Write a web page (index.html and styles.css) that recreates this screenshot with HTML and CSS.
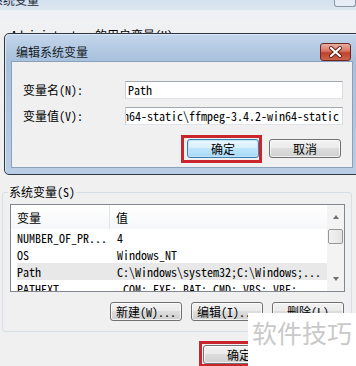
FILE: index.html
```html
<!DOCTYPE html>
<html>
<head>
<meta charset="utf-8">
<title>环境变量</title>
<link rel="stylesheet" href="styles.css">
</head>
<body>
<div class="window">
	<div class="window-title">
		<span class="window-caption">系统变量</span>
		<span class="window-close"></span>
	</div>
	<div class="window-body">
		<div class="user-vars">Administrator 的用户变量(U)</div>
		<fieldset class="group">
			<legend>系统变量(S)</legend>
			<div class="list">
				<div class="list-main">
					<div class="list-head">
						<span class="col-name">变量</span>
						<span class="col-value">值</span>
					</div>
					<div class="row"><span class="col-name">NUMBER_OF_PR...</span><span class="col-value">4</span></div>
					<div class="row"><span class="col-name">OS</span><span class="col-value">Windows_NT</span></div>
					<div class="row selected"><span class="col-name">Path</span><span class="col-value">C:\Windows\system32;C:\Windows;...</span></div>
					<div class="row"><span class="col-name">PATHEXT</span><span class="col-value">.COM;.EXE;.BAT;.CMD;.VBS;.VBE;...</span></div>
				</div>
				<div class="scrollbar">
					<span class="scroll-btn"><i class="arrow-up"></i></span>
					<span class="scroll-thumb"></span>
					<span class="scroll-track"></span>
					<span class="scroll-btn"><i class="arrow-down"></i></span>
				</div>
			</div>
			<div class="actions">
				<button class="btn">新建(W)...</button>
				<button class="btn">编辑(I)...</button>
				<button class="btn">删除(L)</button>
			</div>
		</fieldset>
		<div class="footer">
			<span class="mark"><button class="btn">确定</button></span>
			<button class="btn">取消</button>
		</div>
	</div>

	<div class="dialog">
		<div class="dialog-title">
			<span class="dialog-caption">编辑系统变量</span>
			<span class="dialog-close">
				<svg width="29" height="16" viewBox="0 0 29 16">
					<path d="M10 4 L19 12 M19 4 L10 12" stroke="#5a1d14" stroke-width="4" stroke-linecap="round"/>
					<path d="M10 4 L19 12 M19 4 L10 12" stroke="#fff" stroke-width="2.2" stroke-linecap="round"/>
				</svg>
			</span>
		</div>
		<div class="dialog-content">
			<div class="form">
				<label>变量名(N):</label>
				<div class="field"><span>Path</span></div>
				<label>变量值(V):</label>
				<div class="field field-end"><span>C:\ffmpeg-3.4.2-win64-static\ffmpeg-3.4.2-win64-static</span></div>
			</div>
			<div class="dialog-actions">
				<span class="mark"><button class="btn btn-default">确定</button></span>
				<button class="btn btn-cancel">取消</button>
			</div>
		</div>
	</div>

	<div class="watermark">软件技巧</div>
</div>
</body>
</html>
```

FILE: styles.css
```css
* {
	box-sizing: border-box;
}
html, body {
	margin: 0;
}
body {
	width: 356px;
	height: 366px;
	overflow: hidden;
	background-color: #f0f0f0;
	color: #000;
	font: 12px/14px "Noto Sans Mono CJK SC", "Noto Sans CJK SC", "DejaVu Sans Mono", monospace;
}
.window {
	position: relative;
	height: 366px;
}
.window-title {
	display: flex;
	height: 10px;
	overflow: hidden;
	background: linear-gradient(#d3e0ee, #dde7f1);
}
.window-caption {
	margin: -8px 0 0 -9px;
	font: 12px/16px "Noto Sans CJK SC", sans-serif;
	color: #1d2a3a;
}
.window-close {
	margin-left: auto;
	width: 22px;
	height: 7px;
	border: 1px solid #8b96a3;
	border-top: 0;
	border-radius: 0 0 3px 3px;
	background: #e7edf4;
}
.window-body {
	padding-left: 2px;
	background: linear-gradient(#edf1f5, #f0f0f0 24px);
}
.user-vars {
	height: 175px;
	padding: 18px 0 0 9px;
}

/* system variables group */
.group {
	width: 350px;
	margin: 0;
	padding: 5px 6px 10px 7px;
	border: 1px solid #d5dfe5;
	border-radius: 3px;
	min-width: 0;
}
.group legend {
	margin-left: -2px;
	padding: 0 1px;
	line-height: 14px;
}
.list {
	display: flex;
	height: 88px;
	border: 1px solid #828790;
	background-color: #fff;
}
.list-main {
	flex: 1;
	overflow: hidden;
}
.list-head {
	display: flex;
	height: 24px;
	background: linear-gradient(#fff, #f6f7f9);
}
.list-head .col-name {
	width: 99px;
	padding: 4px 0 0 6px;
	border-right: 1px solid #e2e6ea;
}
.list-head .col-value {
	padding: 4px 0 0 6px;
}
.list-head span {
	line-height: 18px;
}
.row {
	display: flex;
	height: 17px;
	margin-left: 6px;
	line-height: 17px;
	white-space: nowrap;
}
.row .col-name {
	width: 94px;
}
.row .col-value {
	padding-left: 6px;
}
.row.selected {
	background-color: #e8e8e8;
}
.scrollbar {
	display: flex;
	flex-direction: column;
	width: 17px;
	background-color: #f3f3f3;
}
.scroll-btn {
	display: flex;
	align-items: center;
	justify-content: center;
	height: 24px;
}
.scroll-thumb {
	height: 15px;
	margin: 0 1px;
	border: 1px solid #979797;
	border-radius: 2px;
	background: linear-gradient(90deg, #f2f2f2, #e4e4e4);
}
.scroll-track {
	flex: 1;
}
.arrow-up, .arrow-down {
	width: 0;
	height: 0;
	border-left: 3.5px solid transparent;
	border-right: 3.5px solid transparent;
}
.arrow-up {
	border-bottom: 4px solid #6f6f6f;
}
.arrow-down {
	border-top: 4px solid #6f6f6f;
}
.actions {
	display: flex;
	justify-content: flex-end;
	gap: 9px;
	margin-top: 10px;
	padding-right: 1px;
}

/* buttons */
.btn {
	width: 72px;
	height: 19px;
	padding: 0;
	border: 1px solid #707070;
	border-radius: 3px;
	background: linear-gradient(#f2f2f2, #ebebeb 45%, #dddddd 50%, #cfcfcf);
	box-shadow: inset 0 0 0 1px rgba(255, 255, 255, .7);
	color: #000;
	font: inherit;
	line-height: 17px;
	white-space: nowrap;
}
.btn-default {
	border-color: #3c7fb1;
	background: linear-gradient(#eaf6fd, #d9f0fc 45%, #bee6fd 50%, #a7d9f5);
	box-shadow: inset 0 0 0 1px #bfe3f6;
}
.mark {
	display: inline-block;
	border: 3px solid #c8252c;
	padding: 1px 0 2px 3px;
}
.footer {
	display: flex;
	align-items: flex-start;
	gap: 9px;
	margin-top: 9px;
	padding-left: 197px;
}
.footer .mark {
	padding: 1px 1px 0 1px;
}

/* edit dialog */
.dialog {
	position: absolute;
	top: 33px;
	left: 4px;
	width: 356px;
	height: 142px;
	display: flex;
	flex-direction: column;
	border: 1px solid #2d3744;
	border-radius: 5px 0 0 5px;
	background: linear-gradient(#c3d6eb, #a7c0dc 28px, #b9cde4);
	box-shadow: inset 1px 1px 0 #dbe7f4;
}
.dialog-title {
	display: flex;
	align-items: flex-start;
	height: 27px;
	padding: 0 8px 0 11px;
}
.dialog-caption {
	margin-top: 11px;
	font: 12px/14px "Noto Sans CJK SC", sans-serif;
	color: #141c26;
}
.dialog-close {
	display: flex;
	margin: 9px 0 0 auto;
	width: 31px;
	height: 18px;
	border: 1px solid #6b2a20;
	border-radius: 3px;
	background: linear-gradient(#eab0a4, #d77461 45%, #c0412b 55%, #cf634b);
}
.dialog-content {
	flex: 1;
	margin: 0 6px 6px 6px;
	border: 1px solid #8aa0bb;
	background-color: #f0f0f0;
}
.form {
	display: grid;
	grid-template-columns: 102px 218px;
	grid-auto-rows: 18px;
	row-gap: 8px;
	padding: 19px 9px 0 11px;
}
.form label {
	line-height: 18px;
}
.field {
	display: flex;
	overflow: hidden;
	padding: 0 3px 0 2px;
	border: 1px solid;
	border-color: #a2a9b2 #d8dce2 #e1e5ea #c9ced5;
	background-color: #fff;
	line-height: 16px;
	white-space: nowrap;
}
.field-end {
	justify-content: flex-end;
}
.dialog-actions {
	display: flex;
	align-items: flex-start;
	justify-content: flex-end;
	gap: 7px;
	margin-top: 10px;
	padding-right: 11px;
}
.btn-cancel {
	margin-top: 4px;
}

.watermark {
	position: absolute;
	left: 248px;
	top: 313px;
	width: 108px;
	height: 53px;
	padding-left: 4px;
	background-color: #fff;
	color: #c9c9c9;
	font: 25px/38px "Noto Sans CJK SC", sans-serif;
}
```
